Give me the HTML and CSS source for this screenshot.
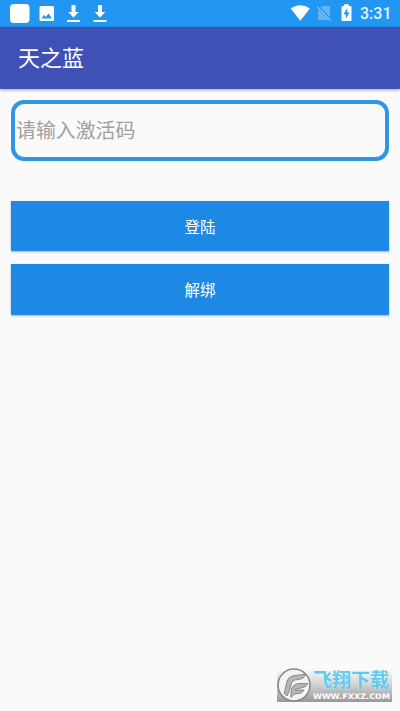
FILE: index.html
```html
<!DOCTYPE html>
<html lang="zh-CN">
<head>
<meta charset="utf-8">
<title>天之蓝</title>
<link rel="stylesheet" href="styles.css">
</head>
<body>
<div class="status">
  <svg class="status-icons" width="110" height="27" viewBox="0 0 110 27" fill="#fff">
    <rect x="10" y="4" width="19.500" height="19" rx="4"/>
    <path fill-rule="evenodd" d="M41 6h11.500q1.500 0 1.500 1.500v12q0 1.500-1.500 1.500h-11.500q-1.500 0-1.500-1.500v-12q0-1.500 1.500-1.500zM41.500 18.500h10.500l-3.500-5-2.700 3.400-1.800-2.100z"/>
    <path d="M71.500 5h4v7h3.300l-5.300 5.500-5.300-5.500h3.300zM67 20h13v2h-13z"/>
    <path d="M98 5h4v7h3.300l-5.300 5.500-5.300-5.500h3.300zM93.500 20h13v2h-13z"/>
  </svg>
  <div class="status-right">
    <svg width="66" height="27" viewBox="290 0 66 27" fill="#fff">
      <path d="M290.700 8.500q9.600-6.600 19.200 0l-9.600 12.200z"/>
      <path fill="#64b5f6" d="M322.500 6h7.500v11l-9.500-9.500zM318 9.500l10.500 10.500h-10.500z"/>
      <path d="M318 5.800l13 13.500" stroke="#2196f3" stroke-width="1.200"/>
      <path d="M317.300 6.800l13.500 14" stroke="#7cc3f9" stroke-width="1.300"/>
      <path fill-rule="evenodd" d="M344.200 4.300h4.600v1.700h1.700q1 0 1 1v13q0 1-1 1h-8q-1 0-1-1v-13q0-1 1-1h1.700zM347.300 8l-3.800 6.300h2.300v4.500l3.700-6.300h-2.200z"/>
    </svg>
    <span class="clock">3:31</span>
  </div>
</div>
<header class="appbar"><h1 class="title">天之蓝</h1></header>
<main class="content">
  <input class="code" type="text" placeholder="请输入激活码">
  <button class="btn">登陆</button>
  <button class="btn">解绑</button>
</main>
<div class="mark">
  <svg class="mark-logo" width="36" height="36" viewBox="0 0 36 36">
    <circle cx="18" cy="18" r="16" fill="#f4f4f4" stroke="#858585" stroke-width="1.500"/>
    <path d="M8 26C11 19 9 10 18 8.500q6-.5 12-1.500-2 5-8 5.500-6 0-7 5.500t-4 11z" fill="#b5b5b5" stroke="#777" stroke-width=".8"/>
    <path d="M15 26q0-9 8-9.500h9q-2 4-7 4.500-5 0-6 2h9q-2 4-7 3.500-3 0-6 4z" fill="#b5b5b5" stroke="#777" stroke-width=".8"/>
  </svg>
  <div class="mark-text">
    <span class="mark-name">飞翔下载</span>
    <svg class="mark-url" width="78" height="9" viewBox="0 0 78 9"><text x="0" y="7" textLength="77" lengthAdjust="spacingAndGlyphs">WWW.FXXZ.COM</text></svg>
  </div>
</div>
</body>
</html>
```
FILE: styles.css
```css
* { box-sizing: border-box; }
body {
  margin: 0;
  height: 711px;
  overflow: hidden;
  background: #fafafa;
  font-family: Roboto, "Noto Sans CJK SC", sans-serif;
}
.status {
  height: 27px;
  background: #2196f3;
  display: flex;
  justify-content: space-between;
}
.status svg { display: block; }
.status-right { display: flex; width: 110px; }
.clock {
  margin-left: 4px;
  color: #fff;
  font-size: 16px;
  line-height: 28px;
  font-weight: 500;
  opacity: .9;
}
.appbar {
  height: 62px;
  padding: 2px 0 0 18px;
  background: #3f51b5;
  box-shadow: 0 1px 3px rgba(0, 0, 0, .35);
  display: flex;
  align-items: center;
}
.title {
  margin: 0;
  color: #fff;
  font-size: 22px;
  line-height: 32px;
  font-weight: 400;
}
.content {
  padding: 11px 11px 0;
  display: flex;
  flex-direction: column;
}
.code {
  height: 61px;
  margin-bottom: 40px;
  padding: 2px 1px 0;
  border: 4px solid #3095e2;
  border-radius: 13px;
  background: #fafafa;
  font-family: inherit;
  font-size: 19.9px;
  outline: none;
}
.code::placeholder { color: #a0a0a0; opacity: 1; }
.btn {
  height: 50px;
  margin-bottom: 13px;
  padding: 0;
  border: 0;
  background: #1e88e5;
  box-shadow: 0 1px 2px rgba(0, 0, 0, .3);
  color: #fff;
  font-family: inherit;
  font-size: 15.5px;
}
.btn + .btn { height: 51px; padding-bottom: 1px; }
.mark {
  position: absolute;
  left: 277px;
  top: 669px;
  width: 115px;
  height: 33px;
  display: flex;
  background: linear-gradient(#fafafa, #d4d4d4 45%, #999);
}
.mark-logo { flex: none; margin: -2px 0 0 -1px; }
.mark-text { padding-left: 1px; }
.mark-name {
  display: block;
  height: 23px;
  line-height: 23px;
  font-size: 19px;
  font-weight: 700;
  color: #62c9ee;
  white-space: nowrap;
  text-shadow: 0 0 1px #e8faff;
}
.mark-url { display: block; }
.mark-url text {
  font-family: "DejaVu Sans", sans-serif;
  font-size: 7.500px;
  font-weight: 700;
  fill: #fff;
}
```
